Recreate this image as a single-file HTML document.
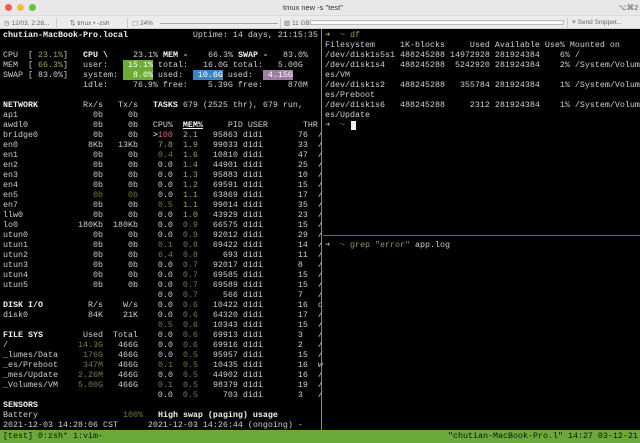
<!DOCTYPE html>
<html><head><meta charset="utf-8"><style>
*{margin:0;padding:0;box-sizing:border-box}
body{width:640px;height:443px;overflow:hidden;background:#000;position:relative;font-family:"Liberation Sans",sans-serif}
#title{position:absolute;left:0;top:0;width:640px;height:15px;background:#e9e7e9;}
#tool{position:absolute;left:0;top:15px;width:640px;height:14px;background:#ececec;border-bottom:1px solid #cfcfcf;border-top:1px solid #dcdcdc}
.dot{position:absolute;top:4px;width:7px;height:7px;border-radius:50%}
.tt{position:absolute;font-size:7.5px;color:#333;top:3px}
.tb{position:absolute;font-size:6.5px;color:#666;top:3px;white-space:nowrap}
.sep{position:absolute;top:2px;width:1px;height:10px;background:#ccc}
pre{position:absolute;font-family:"Liberation Mono",monospace;font-size:8.33px;line-height:10px;color:#cfcfcf;white-space:pre}
b{color:#f2f2f2;font-weight:bold}
.g{color:#8fae55}.g2{color:#a9bf66}.d{color:#6d8244}.r{color:#e46565}.w{color:#fff}
.hg{background:#6cab36;color:#fff}.hb{background:#3f84c2;color:#fff}.hp{background:#9c7fa0;color:#fff}
.ar{color:#8fd14f;font-weight:bold}.ti{color:#6fa07a}.ol{color:#8a9a5b}
#vdiv{position:absolute;left:321px;top:29px;width:1px;height:401px;background:#8a8a8a}
#hdiv{position:absolute;left:323px;top:235px;width:317px;height:1px;background:#5e7040}
#status{position:absolute;left:0;top:430px;width:640px;height:13px;background:#6aaa3a}
#cursor{position:absolute;left:351px;top:121px;width:5px;height:9px;background:#f0f0f0}
</style></head><body>
<div id="title">
<div class="dot" style="left:5px;background:#ee5e57"></div>
<div class="dot" style="left:17px;background:#f4bd3a"></div>
<div class="dot" style="left:29px;background:#5fc440"></div>
<div class="tt" style="left:283px">tmux new -s "test"</div>
<div class="tt" style="left:618px;color:#555">⌥⌘2</div>
</div>
<div id="tool">
<div class="tb" style="left:4px">◷ 12/03, 2:28...</div>
<div class="sep" style="left:56px"></div>
<div class="tb" style="left:70px">⇅ tmux • -zsh</div>
<div class="sep" style="left:127px"></div>
<div class="tb" style="left:132px">▢ 24%</div>
<div style="position:absolute;left:160px;top:7px;width:118px;height:1px;background:#aaa"></div>
<div class="sep" style="left:280px"></div>
<div class="tb" style="left:284px">▥ 11 GB</div>
<div style="position:absolute;left:310px;top:4px;width:254px;height:5px;border:1px solid #bbb;background:#f6f6f6"></div>
<div class="sep" style="left:567px"></div>
<div class="tb" style="left:572px">≡ Send Snippet...</div>
</div>

<pre style="left:3px;top:30px"><b>chutian-MacBook-Pro.local</b>             Uptime: 14 days, 21:15:35

CPU  [ <span class="g">23.1%</span>]   <b>CPU \</b>     23.1% <b>MEM -</b>    66.3% <b>SWAP -</b>   83.0%
MEM  [ <span class="g">66.3%</span>]   user:   <span class="hg"> 15.1%</span> total:   16.0G total:   5.00G
SWAP [ 83.0%]   system: <span class="hg">  8.0%</span> used:  <span class="hb"> 10.6G</span> used:  <span class="hp"> 4.15G</span>
                idle:     76.9% free:    5.39G free:     870M

<b>NETWORK</b>         Rx/s   Tx/s   <b>TASKS</b> 679 (2525 thr), 679 run,
ap1               0b     0b
awdl0             0b     0b   CPU%  <b><u>MEM%</u></b>     PID USER       THR
bridge0           0b     0b   <span class="w">&gt;</span><span class="r">100</span>  <span class="g2">2.1</span>   95863 didi       76  /
en0              8Kb   13Kb    <span class="g">7.8</span>  <span class="g">1.9</span>   99033 didi       33  /
en1               0b     0b    <span class="d">0.4</span>  <span class="g">1.6</span>   10810 didi       47  /
en2               0b     0b    0.0  <span class="g">1.4</span>   44901 didi       25  /
en3               0b     0b    0.0  <span class="g">1.3</span>   95883 didi       10  /
en4               0b     0b    0.0  <span class="g">1.2</span>   69591 didi       15  /
en5               <span class="d">0b     0b</span>    0.0  <span class="g">1.1</span>   63869 didi       17  /
en7               0b     0b    <span class="d">0.5</span>  <span class="g">1.1</span>   99014 didi       35  /
llw0              0b     0b    0.0  <span class="g">1.0</span>   43929 didi       23  /
lo0            180Kb  180Kb    0.0  <span class="d">0.9</span>   66575 didi       15  /
utun0             0b     0b    0.0  <span class="d">0.9</span>   92012 didi       29  /
utun1             0b     0b    <span class="d">0.1</span>  <span class="d">0.8</span>   69422 didi       14  /
utun2             0b     0b    <span class="d">6.4</span>  <span class="d">0.8</span>     693 didi       11  /
utun3             0b     0b    0.0  <span class="d">0.7</span>   92017 didi       8   /
utun4             0b     0b    0.0  <span class="d">0.7</span>   69585 didi       15  /
utun5             0b     0b    0.0  <span class="d">0.7</span>   69589 didi       15  /
                               0.0  <span class="d">0.7</span>     566 didi       7   /
<b>DISK I/O</b>         R/s    W/s    0.0  <span class="d">0.6</span>   10422 didi       16  c
disk0            84K    21K    0.0  <span class="d">0.6</span>   64320 didi       17  /
                               <span class="d">0.5</span>  <span class="d">0.6</span>   10343 didi       15  /
<b>FILE SYS</b>        Used  Total    0.0  <span class="d">0.6</span>   69913 didi       3   /
/              <span class="d">14.3G</span>   466G    0.0  <span class="d">0.6</span>   69916 didi       2   /
_lumes/Data     <span class="d">176G</span>   466G    0.0  <span class="d">0.5</span>   95957 didi       15  /
_es/Preboot     <span class="d">347M</span>   466G    <span class="d">0.1</span>  <span class="d">0.5</span>   10435 didi       16  w
_mes/Update    <span class="d">2.26M</span>   466G    0.0  <span class="d">0.5</span>   44902 didi       16  /
_Volumes/VM    <span class="d">5.00G</span>   466G    <span class="d">0.1</span>  <span class="d">0.5</span>   98379 didi       19  /
                               0.0  <span class="d">0.5</span>     703 didi       3   /
<b>SENSORS</b>
Battery                 <span class="d">100%</span>   <b>High swap (paging) usage</b>
2021-12-03 14:28:06 CST      2021-12-03 14:26:44 (ongoing) -</pre>

<div id="vdiv"></div>
<pre style="left:325px;top:30px"><span class="ar">➜</span>  <span class="ti">~</span> <span class="ol">df</span>
Filesystem     1K-blocks     Used Available Use% Mounted on
/dev/disk1s5s1 488245288 14972928 281924384    6% /
/dev/disk1s4   488245288  5242920 281924384    2% /System/Volum
es/VM
/dev/disk1s2   488245288   355784 281924384    1% /System/Volum
es/Preboot
/dev/disk1s6   488245288     2312 281924384    1% /System/Volum
es/Update
<span class="ar">➜</span>  <span class="ti">~</span></pre>
<div id="cursor"></div>
<div id="hdiv"></div>
<pre style="left:325px;top:240px"><span class="ar">➜</span>  <span class="ti">~</span> <span class="ol">grep</span> <span class="ol">"error"</span> app.log</pre>

<div id="status"></div>
<pre style="left:3px;top:431px;color:#111">[test] 0:zsh* 1:vim-</pre>
<pre style="left:448px;top:431px;color:#111">"chutian-MacBook-Pro.l" 14:27 03-12-21</pre>
</body></html>
